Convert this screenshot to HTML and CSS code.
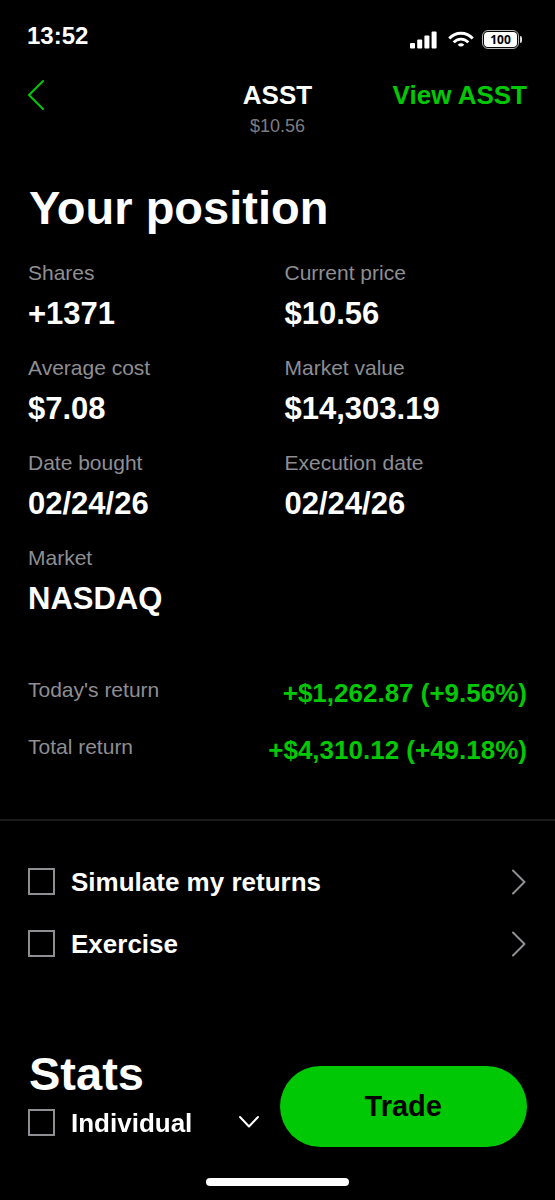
FILE: index.html
```html
<!DOCTYPE html>
<html lang="en">
<head>
<meta charset="utf-8">
<meta name="viewport" content="width=device-width, initial-scale=1">
<title>ASST position</title>
<link rel="stylesheet" href="styles.css">
</head>
<body>
<div class="screen">
  <div class="status">
    <span class="clock">13:52</span>
    <div class="indicators">
      <svg width="30" height="18" viewBox="0 0 30 18" fill="#fff" aria-hidden="true">
        <rect x="0" y="12" width="5" height="5.500" rx="1"/>
        <rect x="7.200" y="8.500" width="5" height="9" rx="1"/>
        <rect x="14.400" y="4.500" width="5" height="13" rx="1"/>
        <rect x="21.600" y="0.500" width="5" height="17" rx="1"/>
      </svg>
      <svg width="26" height="18" viewBox="0 0 26 18" fill="none" stroke="#fff" stroke-width="2.900" aria-hidden="true">
        <path d="M1.300 7.500C7.500.4 18.500.4 24.700 7.500"/>
        <path d="M5.700 11.400C9.600 7 16.400 7 20.300 11.400"/>
        <path d="M9.700 13.700Q13 10.900 16.300 13.700Q13 17.500 9.700 13.700Z" fill="#fff" stroke="none"/>
      </svg>
      <div class="battery"><span class="charge">100</span></div>
    </div>
  </div>

  <header class="nav">
    <button class="icon-button back" type="button" aria-label="Back">
      <svg width="18" height="32" viewBox="0 0 18 32" fill="none" stroke="#00c805" stroke-width="2" stroke-linecap="round" stroke-linejoin="round"><path d="M15 2 1 16 15 30"/></svg>
    </button>
    <div class="ticker">
      <h1 class="symbol">ASST</h1>
      <span class="quote">$10.56</span>
    </div>
    <a class="view-link" href="#">View ASST</a>
  </header>

  <main>
    <section class="position">
      <h2 class="heading">Your position</h2>
      <dl class="facts">
        <div><dt>Shares</dt><dd>+1371</dd></div>
        <div><dt>Current price</dt><dd>$10.56</dd></div>
        <div><dt>Average cost</dt><dd>$7.08</dd></div>
        <div><dt>Market value</dt><dd>$14,303.19</dd></div>
        <div><dt>Date bought</dt><dd>02/24/26</dd></div>
        <div><dt>Execution date</dt><dd>02/24/26</dd></div>
        <div><dt>Market</dt><dd>NASDAQ</dd></div>
      </dl>
      <dl class="returns">
        <div><dt>Today's return</dt><dd>+$1,262.87 (+9.56%)</dd></div>
        <div><dt>Total return</dt><dd>+$4,310.12 (+49.18%)</dd></div>
      </dl>
    </section>

    <section class="actions">
      <div class="option">
        <input class="tick" type="checkbox" id="simulate">
        <label for="simulate">Simulate my returns</label>
        <button class="icon-button" type="button" aria-label="Open simulation">
          <svg width="16" height="26" viewBox="0 0 16 26" fill="none" stroke="#8e8e93" stroke-width="2" stroke-linecap="round" stroke-linejoin="round"><path d="M2 1.500 13.500 13 2 24.500"/></svg>
        </button>
      </div>
      <div class="option">
        <input class="tick" type="checkbox" id="exercise">
        <label for="exercise">Exercise</label>
        <button class="icon-button" type="button" aria-label="Open exercise">
          <svg width="16" height="26" viewBox="0 0 16 26" fill="none" stroke="#8e8e93" stroke-width="2" stroke-linecap="round" stroke-linejoin="round"><path d="M2 1.500 13.500 13 2 24.500"/></svg>
        </button>
      </div>
    </section>

    <section class="stats">
      <h2 class="heading">Stats</h2>
    </section>
  </main>

  <footer class="dock">
    <div class="dock-row">
      <div class="option account">
        <input class="tick" type="checkbox" id="individual">
        <label for="individual">Individual</label>
        <button class="icon-button" type="button" aria-label="Choose account">
          <svg width="22" height="16" viewBox="0 0 22 16" fill="none" stroke="#fff" stroke-width="2" stroke-linecap="round" stroke-linejoin="round"><path d="M2 2 11 11.500 20 2"/></svg>
        </button>
      </div>
      <button class="trade" type="button">Trade</button>
    </div>
    <div class="home-bar"></div>
  </footer>
</div>
</body>
</html>
```
FILE: styles.css
```css
* {
  box-sizing: border-box;
}

body {
  margin: 0;
  background: #000;
  color: #fff;
  font-family: "Liberation Sans", Arial, sans-serif;
}

h1,
h2,
dl,
dd {
  margin: 0;
}

svg {
  display: block;
}

.screen {
  min-height: 100vh;
  padding-bottom: 96px;
}

.status {
  display: flex;
  justify-content: space-between;
  align-items: flex-start;
  padding: 22px 36px 0 27px;
}

.clock {
  font-size: 24px;
  font-weight: 700;
  line-height: 28px;
}

.indicators {
  display: flex;
  align-items: center;
  gap: 8px;
  padding-top: 8px;
}

.battery {
  position: relative;
  width: 37px;
  height: 19px;
  padding: 1px;
  border: 1px solid #b8b8b8;
  border-radius: 6px;
}

.battery::after {
  content: "";
  position: absolute;
  top: 5px;
  right: -4px;
  width: 2px;
  height: 7px;
  border-radius: 0 4px 4px 0;
  background: #ddd;
}

.charge {
  display: block;
  border-radius: 4px;
  background: #fff;
  color: #000;
  font-family: "Open Sans", "Noto Sans", sans-serif;
  font-size: 12px;
  font-weight: 700;
  line-height: 15px;
  text-align: center;
}

.nav {
  display: grid;
  grid-template-columns: 1fr auto 1fr;
  align-items: start;
  padding: 29px 28px 0;
}

.icon-button {
  padding: 0;
  border: 0;
  background: none;
  cursor: pointer;
}

.back {
  justify-self: start;
}

.ticker {
  text-align: center;
}

.symbol,
.view-link {
  font-size: 26px;
  font-weight: 700;
  line-height: 32px;
}

.quote {
  display: block;
  color: #7c7c80;
  font-size: 18px;
  line-height: 30px;
}

.view-link {
  justify-self: end;
  color: #00c805;
  text-decoration: none;
}

.position {
  padding: 39px 28px 53px;
  border-bottom: 2px solid #1c1c1e;
}

.heading {
  font-size: 47px;
  line-height: 56px;
  padding-left: 1px;
}

.facts {
  display: grid;
  grid-template-columns: 1fr 1fr;
  gap: 23px 14px;
  padding-top: 24px;
}

dt {
  color: #8e8e93;
  font-size: 21px;
  line-height: 26px;
}

.facts dd {
  padding-top: 10px;
  font-size: 31px;
  font-weight: 700;
  line-height: 36px;
}

.returns {
  display: grid;
  gap: 25px;
  padding-top: 60px;
}

.returns div {
  display: flex;
  justify-content: space-between;
}

.returns dd {
  color: #00c805;
  font-size: 26px;
  font-weight: 700;
  line-height: 32px;
}

.actions {
  display: grid;
  gap: 30px;
  padding: 45px 28px 0;
}

.option {
  display: flex;
  align-items: center;
  gap: 16px;
}

.option label {
  flex: 1;
  font-size: 26px;
  font-weight: 700;
  line-height: 32px;
}

.tick {
  flex: none;
  appearance: none;
  width: 27px;
  height: 27px;
  margin: 0 0 2px;
  border: 2px solid #8e8e93;
  background: #000;
}

.tick:checked {
  background: #00c805;
}

.stats {
  padding: 86px 28px 0;
}

.dock {
  position: fixed;
  right: 0;
  bottom: 0;
  left: 0;
  padding: 0 28px 14px;
}

.dock-row {
  display: grid;
  grid-template-columns: 1fr 1fr;
  gap: 4px;
  align-items: end;
}

.account {
  padding: 0 16px 8px 0;
}

.trade {
  padding: 24px 0;
  border: 0;
  border-radius: 41px;
  background: #00c805;
  color: #000;
  font: 700 29px/33px "Liberation Sans", Arial, sans-serif;
  cursor: pointer;
}

.home-bar {
  width: 143px;
  height: 8px;
  margin: 31px auto 0;
  border-radius: 4px;
  background: #fff;
}
```
